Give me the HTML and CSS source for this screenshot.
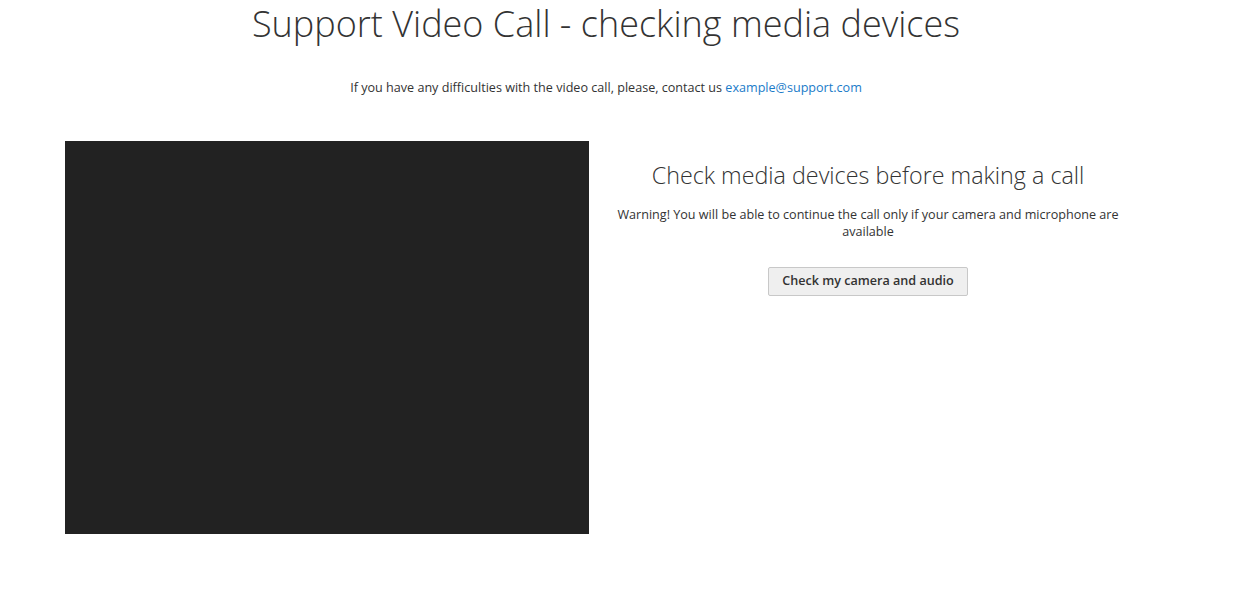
FILE: index.html
```html
<!DOCTYPE html>
<html>
<head>
<meta charset="utf-8">
<link rel="stylesheet" href="styles.css">
</head>
<body>
<div class="page">
  <h1 class="title">Support Video Call - checking media devices</h1>
  <p class="contact">If you have any difficulties with the video call, please, contact us <a href="#" class="link">example@support.com</a></p>
  <div class="main">
    <div class="video"></div>
    <div class="panel">
      <h2 class="panel-title">Check media devices before making a call</h2>
      <p class="warning">Warning! You will be able to continue the call only if your camera and microphone are available</p>
      <button class="btn">Check my camera and audio</button>
    </div>
  </div>
</div>
</body>
</html>
```
FILE: styles.css
```css
html, body {
  margin: 0;
  padding: 0;
  background: #fff;
}
body {
  font-family: "Open Sans", "Liberation Sans", sans-serif;
  color: #333;
  font-size: 12.6px;
}
.page {
  width: 1212px;
}
.title {
  margin: 0;
  padding-top: 2px;
  font-size: 36px;
  font-weight: 300;
  line-height: 44px;
  text-align: center;
}
.contact {
  margin: 33px 0 0;
  line-height: 18px;
  text-align: center;
}
.link {
  color: #1a7bc9;
  text-decoration: none;
}
.main {
  display: flex;
  margin-top: 44px;
  padding-left: 65px;
}
.video {
  width: 524px;
  height: 393px;
  background: #222;
  flex: none;
}
.panel {
  width: 520px;
  margin-left: 19px;
  text-align: center;
}
.panel-title {
  margin: 18px 0 0;
  font-size: 23.3px;
  font-weight: 300;
  line-height: 32px;
}
.warning {
  margin: 15px 0 0;
  line-height: 17px;
}
.btn {
  margin-top: 27px;
  width: 200px;
  height: 29px;
  font-family: "Open Sans", "Liberation Sans", sans-serif;
  font-size: 12.6px;
  font-weight: 600;
  color: #333;
  background: #efefef;
  border: 1px solid #c8c8c8;
  border-radius: 2px;
  padding: 0 0 2px;
}
```
